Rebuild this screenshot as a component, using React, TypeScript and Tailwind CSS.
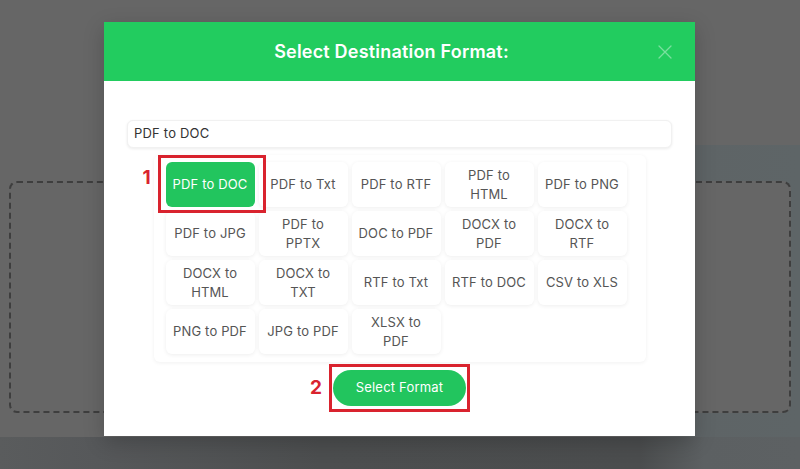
import React from "react";

// each entry lists the lines a label is shown on
const formats: string[][] = [
  ["PDF to DOC"],
  ["PDF to Txt"],
  ["PDF to RTF"],
  ["PDF to", "HTML"],
  ["PDF to PNG"],
  ["PDF to JPG"],
  ["PDF to", "PPTX"],
  ["DOC to PDF"],
  ["DOCX to", "PDF"],
  ["DOCX to", "RTF"],
  ["DOCX to", "HTML"],
  ["DOCX to", "TXT"],
  ["RTF to Txt"],
  ["RTF to DOC"],
  ["CSV to XLS"],
  ["PNG to PDF"],
  ["JPG to PDF"],
  ["XLSX to", "PDF"],
];

const font = { fontFamily: "Inter, 'Open Sans', sans-serif" };

function CloseIcon() {
  return (
    <svg width="14" height="14" viewBox="0 0 14 14" fill="none">
      <path d="M1 1L13 13M13 1L1 13" stroke="rgba(255,255,255,0.4)" strokeWidth="1.3" strokeLinecap="round" />
    </svg>
  );
}

function FormatCard({ lines, active }: { lines: string[]; active: boolean }) {
  return (
    <div
      className={
        active
          ? "flex h-[45px] flex-col items-center justify-center whitespace-nowrap rounded-md bg-[#22c55e] text-center text-[13px] leading-[19px] tracking-[0.15px] text-white"
          : "flex h-[45px] flex-col items-center justify-center whitespace-nowrap rounded-md bg-white text-center text-[13px] leading-[19px] tracking-[0.15px] text-[#555] shadow-[0_1px_4px_rgba(0,0,0,0.07)]"
      }
    >
      {lines.map((l) => (
        <span key={l}>{l}</span>
      ))}
    </div>
  );
}

export default function App() {
  return (
    <div className="relative h-[469px] w-[800px] overflow-hidden bg-[#666666]" style={font}>
      {/* page content behind the overlay */}
      <div className="pt-[145px]">
        <div className="h-[292px] bg-[linear-gradient(to_right,#666666_0%,#666666_80%,#5e6466_88%,#5e6567_100%)] px-[9px] pt-[36px]">
          <div className="h-[232px] rounded-lg border-2 border-dashed border-[#3e3e3e] bg-[#666666]" />
        </div>
        <div className="h-[32px] bg-[linear-gradient(to_right,#5a5c5d_0%,#56585a_12%,#4c4e4f_40%,#4b4d4e_80%,#5c6062_88%,#5d6163_100%)]" />
      </div>

      {/* dialog */}
      <div className="absolute left-[104px] top-[22px] flex h-[414px] w-[591px] flex-col overflow-hidden bg-white shadow-[0_6px_20px_rgba(0,0,0,0.2)]">
        <div className="relative flex h-[59px] items-center justify-center bg-[#22cc5f] pr-[16px]">
          <h2 className="text-[18px] font-semibold tracking-[0.2px] text-white">Select Destination Format:</h2>
          <div className="absolute right-[23px] top-[23px]">
            <CloseIcon />
          </div>
        </div>

        <div className="flex flex-col px-[23px] pt-[39px]">
          <div className="flex h-[28px] items-center rounded-md border border-[#f1f1f1] bg-white px-[6px] text-[13px] tracking-[0.2px] text-[#333] shadow-[0_1px_3px_rgba(0,0,0,0.08)]">
            PDF to DOC
          </div>

          <div className="relative mx-auto mt-[7px] w-[492px] rounded-md bg-white pb-[8px] pl-[12px] pr-[19px] pt-[7px] shadow-[0_1px_4px_rgba(0,0,0,0.06)]">
            <div className="grid grid-cols-[repeat(5,89px)] gap-x-[4px] gap-y-[4px]">
              {formats.map((f, i) => (
                <FormatCard key={f.join(" ")} lines={f} active={i === 0} />
              ))}
            </div>
            {/* step marker 1 */}
            <div className="absolute left-[4px] top-0 h-[58px] w-[108px] border-[3px] border-[#d9232e]" />
            <span className="absolute left-[-11px] top-[9px] text-[19px] font-bold text-[#d9232e]">1</span>
          </div>

          <div className="relative mx-auto mt-[8px]">
            <button className="h-[36px] w-[133px] rounded-full bg-[#22c55e] text-[13px] tracking-[0.2px] text-white">Select Format</button>
            <div className="absolute left-[-4px] top-[-6px] h-[48px] w-[141px] border-[3px] border-[#d9232e]" />
            <span className="absolute left-[-23px] top-[4px] text-[19px] font-bold text-[#d9232e]">2</span>
          </div>
        </div>
      </div>
    </div>
  );
}
